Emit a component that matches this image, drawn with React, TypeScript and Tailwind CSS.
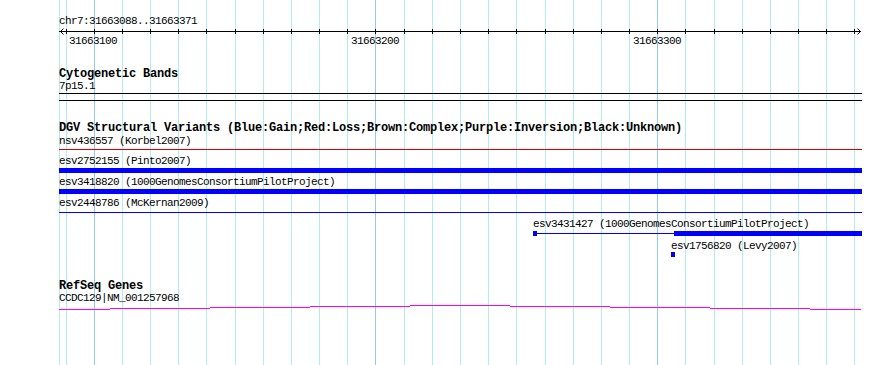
import React from "react";

const GRID = [59, 66, 94, 122, 150, 178, 206, 235, 263, 291, 319, 347, 375, 404, 432, 460, 488, 516, 545, 573, 601, 629, 657, 685, 714, 742, 770, 798, 826, 854];
const DARK = new Set([94, 375, 657]);
const WAVE: [number, number, number][] = [
  [59, 110, 5],
  [110, 210, 4],
  [210, 310, 3],
  [310, 410, 2],
  [410, 510, 1],
  [510, 610, 2],
  [610, 710, 3],
  [710, 810, 4],
  [810, 861, 5],
];

function Reg({ children, className = "" }: { children: React.ReactNode; className?: string }) {
  return (
    <div className={"h-[11px] leading-[11px] text-[11px] tracking-[-0.6px] whitespace-nowrap text-black " + className}>
      {children}
    </div>
  );
}

function Bold({ children, className = "" }: { children: React.ReactNode; className?: string }) {
  return (
    <div className={"font-bold text-[12px] tracking-[-0.2px] whitespace-nowrap text-black " + className}>
      {children}
    </div>
  );
}

export default function App() {
  return (
    <div className="relative w-[890px] h-[365px] bg-white overflow-hidden font-['Liberation_Mono',monospace]">
      <svg className="absolute inset-0" width="890" height="365">
        {GRID.map((x) => (
          <rect key={x} x={x} y={0} width={1} height={365} fill={DARK.has(x) ? "#94c8ee" : "#b2ecee"} />
        ))}
      </svg>
      <div className="relative flex flex-col pl-[59px]">
        <div className="h-[16px]" />
        <Reg>chr7:31663088..31663371</Reg>
        <svg width="803" height="9" className="block">
          <rect x={0} y={4} width={802} height={1} fill="#000" />
          <path d="M4.5 1.5 L1.5 4.5 L4.5 7.5" stroke="#000" fill="none" strokeWidth={1} />
          <path d="M798.5 1.5 L801.5 4.5 L798.5 7.5" stroke="#000" fill="none" strokeWidth={1} />
          {GRID.slice(1).map((x) => (
            <rect key={x} x={x - 59} y={2} width={1} height={5} fill="#000" />
          ))}
        </svg>
        <Reg className="flex">
          <span className="ml-[10px]">31663100</span>
          <span className="ml-[234px]">31663200</span>
          <span className="ml-[234px]">31663300</span>
        </Reg>
        <div className="h-[21px]" />
        <Bold className="h-[13px] leading-[12px]">Cytogenetic Bands</Bold>
        <Reg>7p15.1</Reg>
        <div className="h-px" />
        <div className="w-[803px] h-[8px] border-t border-b border-black" />
        <div className="h-[21px]" />
        <Bold className="h-[13px] leading-[12px]">
          DGV Structural Variants (Blue:Gain;Red:Loss;Brown:Complex;Purple:Inversion;Black:Unknown)
        </Bold>
        <div className="h-px" />
        <Reg>nsv436557 (Korbel2007)</Reg>
        <div className="h-[2px]" />
        <div className="w-[803px] h-px bg-[#dd0000]" />
        <div className="h-[6px]" />
        <Reg>esv2752155 (Pinto2007)</Reg>
        <div className="h-px" />
        <div className="w-[803px] h-[5px] bg-[#0000ff]" />
        <div className="h-[4px]" />
        <Reg>esv3418820 (1000GenomesConsortiumPilotProject)</Reg>
        <div className="h-px" />
        <div className="w-[803px] h-[5px] bg-[#0000ff]" />
        <div className="h-[4px]" />
        <Reg>esv2448786 (McKernan2009)</Reg>
        <div className="h-[3px]" />
        <div className="w-[803px] h-px bg-[#0000ff]" />
        <div className="h-[6px]" />
        <Reg className="ml-[474px]">esv3431427 (1000GenomesConsortiumPilotProject)</Reg>
        <div className="h-px" />
        <div className="flex items-start h-[5px] ml-[474px]">
          <div className="w-[4px] h-[5px] bg-[#0000ff]" />
          <div className="w-[137px] h-px mt-[2px] bg-[#0000ff]" />
          <div className="w-[188px] h-[5px] bg-[#0000ff]" />
        </div>
        <div className="h-[5px]" />
        <Reg className="ml-[612px]">esv1756820 (Levy2007)</Reg>
        <div className="ml-[612px] w-[4px] h-[5px] bg-[#0000ff]" />
        <div className="h-[24px]" />
        <Bold className="h-[12px] leading-[11px]">RefSeq Genes</Bold>
        <Reg>CCDC129|NM_001257968</Reg>
        <svg width="803" height="7" className="block">
          {WAVE.map(([a, b, y]) => (
            <rect key={a} x={a - 59} y={y} width={b - a} height={1} fill="#ff00ff" />
          ))}
        </svg>
      </div>
    </div>
  );
}
